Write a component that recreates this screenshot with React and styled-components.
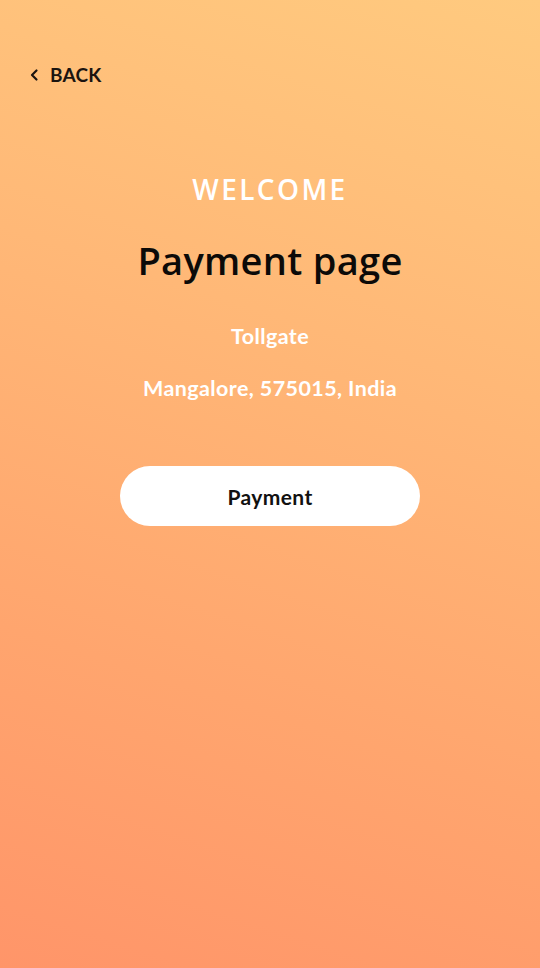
import React from "react";
import styled, { createGlobalStyle } from "styled-components";

const Global = createGlobalStyle`
  html, body { margin: 0; padding: 0; }
  body { font-family: "Lato", "Liberation Sans", sans-serif; }
`;

const Screen = styled.div`
  width: 540px;
  height: 968px;
  background: linear-gradient(198deg, #ffca7f 0%, #ffb877 35%, #ffa56e 70%, #ff9569 100%);
  display: flex;
  flex-direction: column;
  box-sizing: border-box;
  padding: 63px 0 0 29px;
`;

const Back = styled.button`
  display: flex;
  align-items: center;
  gap: 11px;
  background: none;
  border: none;
  padding: 0;
  cursor: pointer;
  font-family: "Lato", sans-serif;
  font-weight: 700;
  font-size: 19px;
  letter-spacing: 0.2px;
  color: #1b1410;
  align-self: flex-start;
`;

const Content = styled.div`
  display: flex;
  flex-direction: column;
  align-items: center;
  margin-left: -29px;
  padding-top: 84px;
`;

const Welcome = styled.h2`
  margin: 0;
  font-family: "Open Sans", "Lato", sans-serif;
  font-weight: 600;
  font-size: 28px;
  letter-spacing: 2.4px;
  color: #ffffff;
`;

const Title = styled.h1`
  margin: 26px 0 0;
  font-family: "Open Sans", "Lato", sans-serif;
  font-weight: 600;
  font-size: 38px;
  letter-spacing: 0.3px;
  color: #0c0a08;
`;

const Info = styled.p`
  margin: ${(p) => p.$top}px 0 0;
  font-family: "Lato", sans-serif;
  font-weight: 700;
  font-size: 21.5px;
  letter-spacing: 0.4px;
  color: #ffffff;
`;

const PayButton = styled.button`
  margin-top: 65px;
  width: 300px;
  height: 60px;
  border: none;
  border-radius: 30px;
  background: #ffffff;
  font-family: "Lato", sans-serif;
  font-weight: 700;
  font-size: 21px;
  letter-spacing: 0.4px;
  color: #111;
  cursor: pointer;
`;

export default function App() {
  return (
    <>
      <Global />
      <Screen>
        <Back>
          <svg width="10" height="14" viewBox="0 0 10 14">
            <path d="M7.5 2.5 L3 7 L7.5 11.5" fill="none" stroke="#1b1410" strokeWidth="2.2" strokeLinecap="round" strokeLinejoin="round" />
          </svg>
          BACK
        </Back>
        <Content>
          <Welcome>WELCOME</Welcome>
          <Title>Payment page</Title>
          <Info $top={37}>Tollgate</Info>
          <Info $top={26}>Mangalore, 575015, India</Info>
          <PayButton>Payment</PayButton>
        </Content>
      </Screen>
    </>
  );
}
